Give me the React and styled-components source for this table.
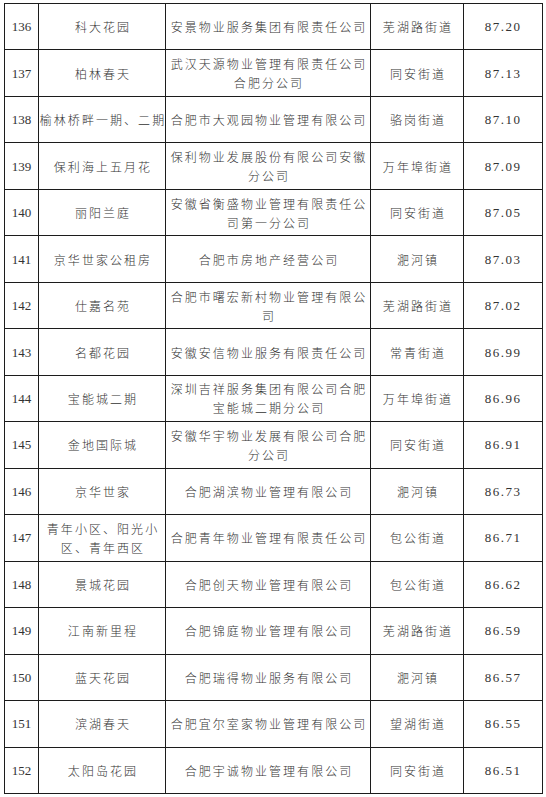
import React from "react";
import styled, { createGlobalStyle } from "styled-components";

const GlobalStyle = createGlobalStyle`
  html, body {
    margin: 0;
    padding: 0;
    background: #ffffff;
  }
  body {
    font-family: "Noto Sans CJK SC", "Liberation Serif", serif;
  }
`;

const Page = styled.div`
  width: 546px;
  height: 797px;
  padding: 3px 0 0 4px;
  box-sizing: border-box;
  background: #fff;
`;

const Table = styled.div`
  display: grid;
  grid-template-columns: 34px 127px 205px 93px 79px;
  grid-template-rows: repeat(17, 1fr);
  width: 539px;
  height: 791px;
  box-sizing: border-box;
  border-left: 1px solid #1c1c1c;
  border-top: 1px solid #1c1c1c;
`;

const Cell = styled.div`
  display: flex;
  flex-direction: column;
  align-items: center;
  justify-content: center;
  box-sizing: border-box;
  border-right: 1px solid #1c1c1c;
  border-bottom: 1px solid #1c1c1c;
  color: #333;
  text-align: center;
  overflow: hidden;
  font-family: ${(p) =>
    p.$num
      ? '"Liberation Serif", serif'
      : '"Noto Sans CJK SC", "Noto Sans CJK JP", sans-serif'};
  font-size: ${(p) => (p.$num ? "13px" : "12px")};
  font-weight: ${(p) => (p.$num ? 400 : 300)};
  letter-spacing: ${(p) => (p.$score ? "1.5px" : p.$num ? "0" : "2.05px")};
  line-height: 19px;
  white-space: nowrap;
`;

const Line = styled.span`
  display: block;
  margin-right: ${(p) => (p.$cjk ? "-2px" : "0")};
`;

const rows = [
  ["136", ["科大花园"], ["安景物业服务集团有限责任公司"], "芜湖路街道", "87.20"],
  ["137", ["柏林春天"], ["武汉天源物业管理有限责任公司", "合肥分公司"], "同安街道", "87.13"],
  ["138", ["榆林桥畔一期、二期"], ["合肥市大观园物业管理有限公司"], "骆岗街道", "87.10"],
  ["139", ["保利海上五月花"], ["保利物业发展股份有限公司安徽", "分公司"], "万年埠街道", "87.09"],
  ["140", ["丽阳兰庭"], ["安徽省衡盛物业管理有限责任公", "司第一分公司"], "同安街道", "87.05"],
  ["141", ["京华世家公租房"], ["合肥市房地产经营公司"], "淝河镇", "87.03"],
  ["142", ["仕嘉名苑"], ["合肥市曙宏新村物业管理有限公", "司"], "芜湖路街道", "87.02"],
  ["143", ["名都花园"], ["安徽安信物业服务有限责任公司"], "常青街道", "86.99"],
  ["144", ["宝能城二期"], ["深圳吉祥服务集团有限公司合肥", "宝能城二期分公司"], "万年埠街道", "86.96"],
  ["145", ["金地国际城"], ["安徽华宇物业发展有限公司合肥", "分公司"], "同安街道", "86.91"],
  ["146", ["京华世家"], ["合肥湖滨物业管理有限公司"], "淝河镇", "86.73"],
  ["147", ["青年小区、阳光小", "区、青年西区"], ["合肥青年物业管理有限责任公司"], "包公街道", "86.71"],
  ["148", ["景城花园"], ["合肥创天物业管理有限公司"], "包公街道", "86.62"],
  ["149", ["江南新里程"], ["合肥锦庭物业管理有限公司"], "芜湖路街道", "86.59"],
  ["150", ["蓝天花园"], ["合肥瑞得物业服务有限公司"], "淝河镇", "86.57"],
  ["151", ["滨湖春天"], ["合肥宜尔室家物业管理有限公司"], "望湖街道", "86.55"],
  ["152", ["太阳岛花园"], ["合肥宇诚物业管理有限公司"], "同安街道", "86.51"],
];

const App = () => {
  return (
    <>
      <GlobalStyle />
      <Page>
        <Table>
          {rows.map(([no, name, company, street, score]) => (
            <React.Fragment key={no}>
              <Cell $num>{no}</Cell>
              <Cell>
                {name.map((l) => (
                  <Line $cjk key={l}>
                    {l}
                  </Line>
                ))}
              </Cell>
              <Cell>
                {company.map((l) => (
                  <Line $cjk key={l}>
                    {l}
                  </Line>
                ))}
              </Cell>
              <Cell>
                <Line $cjk>{street}</Line>
              </Cell>
              <Cell $num $score>
                {score}
              </Cell>
            </React.Fragment>
          ))}
        </Table>
      </Page>
    </>
  );
};

export default App;
